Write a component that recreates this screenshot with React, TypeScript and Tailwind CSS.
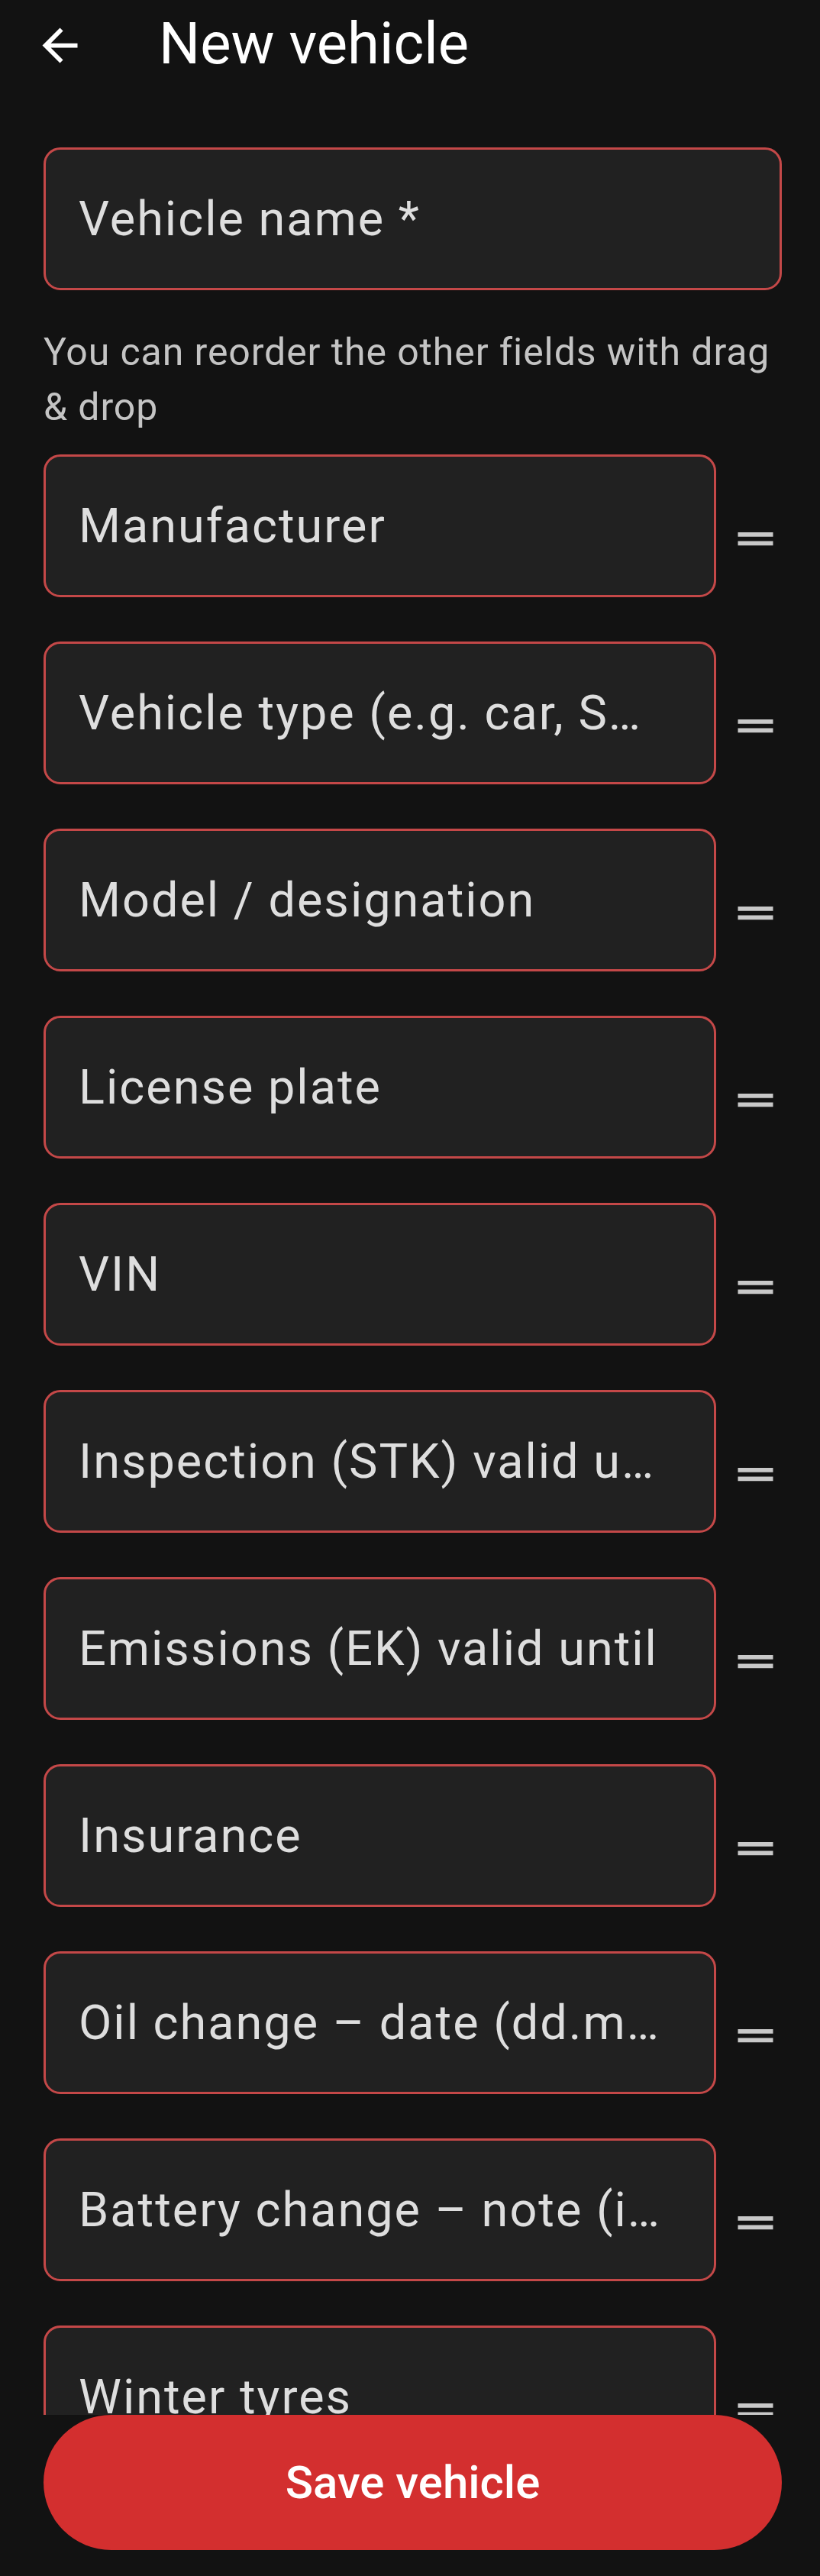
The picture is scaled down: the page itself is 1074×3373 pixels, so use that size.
import React from "react";
import { MdArrowBack, MdDragHandle } from "react-icons/md";

const fields = [
  "Manufacturer",
  "Vehicle type (e.g. car, SUV, motorcycle)",
  "Model / designation",
  "License plate",
  "VIN",
  "Inspection (STK) valid until",
  "Emissions (EK) valid until",
  "Insurance",
  "Oil change – date (dd.mm.yyyy)",
  "Battery change – note (info)",
  "Winter tyres",
];

function Field({ label }: { label: string }) {
  return (
    <div className="flex h-[187px] min-w-0 flex-1 items-center rounded-[22px] border-[3px] border-[#c44848] bg-[#212121] pl-[43px] pr-[70px]">
      <span className="truncate text-[63px] leading-[1.3] tracking-[2px] text-[#dedede]">{label}</span>
    </div>
  );
}

export default function App() {
  return (
    <div
      className="flex h-[3373px] w-full flex-col bg-[#121212]"
      style={{ fontFamily: "Roboto, 'Noto Sans', sans-serif" }}
    >
      {/* top bar */}
      <div className="flex h-[118px] shrink-0 items-center">
        <MdArrowBack size={69} className="ml-[44px] text-white" />
        <h1 className="-mt-[5px] ml-[95px] text-[76px] font-normal leading-none text-white">
          New vehicle
        </h1>
      </div>

      {/* form */}
      <div className="min-h-0 flex-1 overflow-hidden pl-[57px] pr-[50px]">
        <div className="mt-[75px] flex h-[187px] items-center rounded-[22px] border-[3px] border-[#c44848] bg-[#212121] pl-[43px]">
          <span className="text-[63px] leading-[1.3] tracking-[2px] text-[#dedede]">Vehicle name *</span>
        </div>

        <p className="mt-[45px] text-[50px] leading-[72px] tracking-[0.9px] text-[#c4c4c4]">
          You can reorder the other fields with drag &amp; drop
        </p>

        <div className="mt-[26px] flex flex-col gap-[58px]">
          {fields.map((f) => (
            <div key={f} className="flex items-center gap-[17px]">
              <Field label={f} />
              <MdDragHandle size={69} className="mt-[34px] shrink-0 text-[#c8c8c8]" />
            </div>
          ))}
        </div>
      </div>

      {/* save button */}
      <div className="shrink-0 pb-[34px] pl-[57px] pr-[50px]">
        <button className="flex h-[177px] w-full items-center justify-center rounded-full bg-[#d32f2f] text-[60px] font-medium text-white">
          Save vehicle
        </button>
      </div>
    </div>
  );
}
